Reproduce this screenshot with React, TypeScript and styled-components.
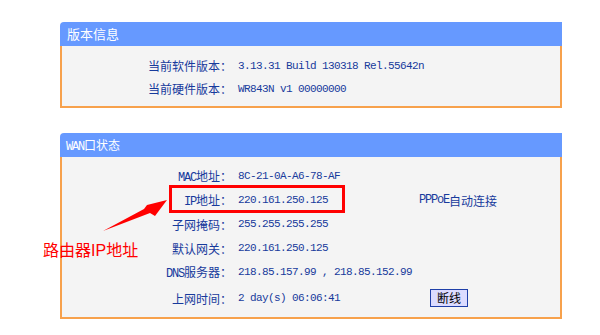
import React from "react";
import styled, { createGlobalStyle } from "styled-components";

const GlobalStyle = createGlobalStyle`
  body {
    margin: 0;
    background: #ffffff;
    font-family: "Noto Sans CJK SC", "Liberation Sans", sans-serif;
  }
`;

const versionRows = [
  { label: "当前软件版本：", value: "3.13.31 Build 130318 Rel.55642n" },
  { label: "当前硬件版本：", value: "WR843N v1 00000000" },
];

const App = () => {
  return (
    <>
      <GlobalStyle />
      <Page>
        <Panel>
          <Header>版本信息</Header>
          <Body>
            {versionRows.map((r) => (
              <Row key={r.label}>
                <Label>{r.label}</Label>
                <Value>{r.value}</Value>
              </Row>
            ))}
          </Body>
        </Panel>

        <Panel $gap={25}>
          <Header $small>
            <Latin>WAN</Latin>口状态
          </Header>
          <Body $tall>
            <Row $h={24}>
              <Label>
                <Latin>MAC</Latin>地址：
              </Label>
              <Value>8C-21-0A-A6-78-AF</Value>
            </Row>
            <Row $h={24}>
              <Label>
                <Latin>IP</Latin>地址：
              </Label>
              <Value>220.161.250.125</Value>
              <Extra>
                <Latin>PPPoE</Latin>自动连接
              </Extra>
            </Row>
            <Row $h={24}>
              <Label>子网掩码：</Label>
              <Value>255.255.255.255</Value>
            </Row>
            <Row $h={24}>
              <Label>默认网关：</Label>
              <Value>220.161.250.125</Value>
            </Row>
            <Row $h={24}>
              <Label>
                <Latin>DNS</Latin>服务器：
              </Label>
              <Value>218.85.157.99 , 218.85.152.99</Value>
            </Row>
            <Row $h={28}>
              <Label>上网时间：</Label>
              <Value>2 day(s) 06:06:41</Value>
              <Extra>
                <Button>断线</Button>
              </Extra>
            </Row>
          </Body>
        </Panel>

        {/* annotation drawn over the screenshot */}
        <Highlight />
        <Arrow width="600" height="335" viewBox="0 0 600 335">
          <polygon
            points="103,231 144,209 147,205 167,200 155,216 150,213"
            fill="#ff0000"
          />
        </Arrow>
        <Note>
          路由器<span>IP</span>地址
        </Note>
      </Page>
    </>
  );
};

export default App;

const Page = styled.div`
  position: relative;
  width: 600px;
  height: 335px;
  box-sizing: border-box;
  padding: 22px 0 0 60px;
  overflow: hidden;
`;

const Panel = styled.section<{ $gap?: number }>`
  width: 502px;
  margin-top: ${(p) => p.$gap || 0}px;
`;

const Header = styled.div<{ $small?: boolean }>`
  height: 24px;
  line-height: 24px;
  background: #6699ff;
  border-radius: 4px 0 0 0;
  color: #ffffff;
  font-size: ${(p) => (p.$small ? 12 : 13)}px;
  padding-left: ${(p) => (p.$small ? 6 : 7)}px;
`;

const Body = styled.div<{ $tall?: boolean }>`
  background: #f4f4f4;
  border: 2px solid #f7a14c;
  border-top: none;
  padding: ${(p) => (p.$tall ? "7px 0 5px" : "8px 0 6px")};
`;

const Row = styled.div<{ $h?: number }>`
  display: grid;
  grid-template-columns: 170px 175px 1fr;
  column-gap: 6px;
  align-items: center;
  height: ${(p) => p.$h || 23}px;
  color: #173a9c;
`;

const Label = styled.div`
  text-align: right;
  font-size: 12px;
  white-space: nowrap;
`;

const Latin = styled.span`
  font-family: "Liberation Mono", monospace;
  font-size: 12px;
  letter-spacing: -1.2px;
`;

const Value = styled.div`
  font-family: "Liberation Mono", monospace;
  font-size: 11px;
  letter-spacing: -0.6px;
  white-space: nowrap;
`;

const Extra = styled.div`
  display: flex;
  align-items: center;
  font-size: 12px;
  white-space: nowrap;
`;

const Button = styled.button`
  margin-left: 11px;
  width: 38px;
  height: 18px;
  padding: 0;
  background: #dcdcff;
  border: 1px solid #1f3fa8;
  color: #000000;
  font-family: "Noto Sans CJK SC", sans-serif;
  font-size: 12px;
  line-height: 16px;
`;

const Highlight = styled.div`
  position: absolute;
  left: 169px;
  top: 185px;
  width: 176px;
  height: 28px;
  box-sizing: border-box;
  border: 3px solid #ff0000;
`;

const Arrow = styled.svg`
  position: absolute;
  left: 0;
  top: 0;
  pointer-events: none;
`;

const Note = styled.div`
  position: absolute;
  left: 43px;
  top: 239px;
  color: #ff0000;
  font-size: 16px;
  line-height: 20px;
  white-space: nowrap;

  span {
    font-family: "Liberation Sans", sans-serif;
  }
`;
